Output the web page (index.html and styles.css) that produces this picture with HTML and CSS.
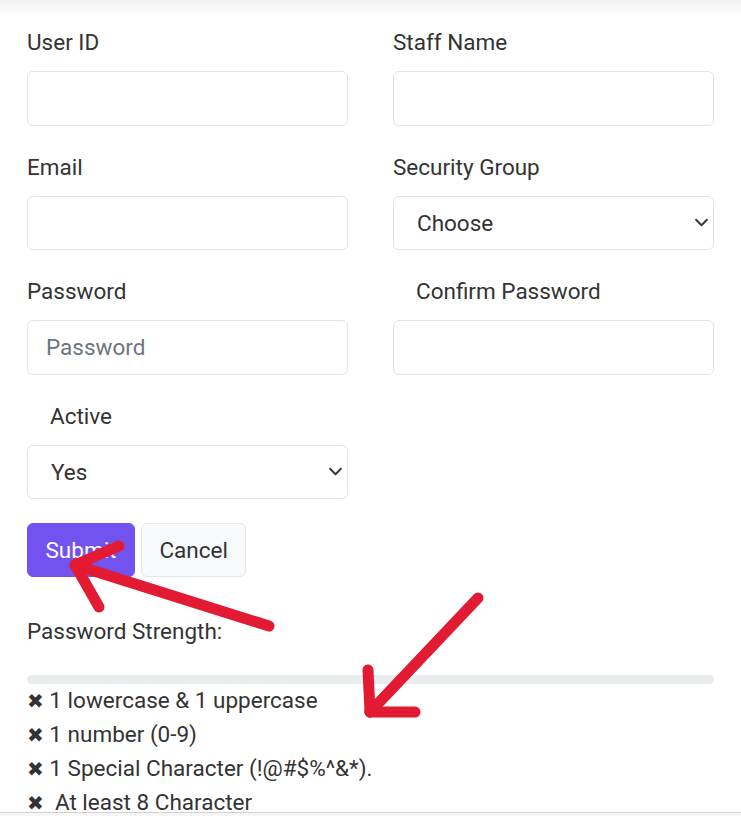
FILE: index.html
```html
<!DOCTYPE html>
<html lang="en">
<head>
<meta charset="utf-8">
<title>Add User</title>
<link rel="stylesheet" href="styles.css">
</head>
<body>
<div class="topshade"></div>
<form class="user-form">
  <div class="row">
    <div class="field">
      <label class="form-label">User ID</label>
      <input class="form-control" type="text">
    </div>
    <div class="field">
      <label class="form-label">Staff Name</label>
      <input class="form-control" type="text">
    </div>
  </div>
  <div class="row">
    <div class="field">
      <label class="form-label">Email</label>
      <input class="form-control" type="email">
    </div>
    <div class="field">
      <label class="form-label">Security Group</label>
      <select class="form-select"><option>Choose</option></select>
    </div>
  </div>
  <div class="row">
    <div class="field">
      <label class="form-label">Password</label>
      <input class="form-control" type="password" placeholder="Password">
    </div>
    <div class="field">
      <label class="form-label indent">Confirm Password</label>
      <input class="form-control" type="password">
    </div>
  </div>
  <div class="row">
    <div class="field">
      <label class="form-label indent">Active</label>
      <select class="form-select"><option>Yes</option><option>No</option></select>
    </div>
  </div>
  <div class="actions">
    <button type="button" class="btn btn-primary">Submit</button>
    <button type="button" class="btn btn-light">Cancel</button>
  </div>
  <div class="strength-label">Password Strength:</div>
  <div class="progress"></div>
  <ul class="rules">
    <li><span class="x">✖</span> 1 lowercase &amp; 1 uppercase</li>
    <li><span class="x">✖</span> 1 number (0-9)</li>
    <li><span class="x">✖</span> 1 Special Character (!@#$%^&amp;*).</li>
    <li><span class="x">✖</span>&nbsp; At least 8 Character</li>
  </ul>
</form>
<svg class="annotations" width="741" height="816" viewBox="0 0 741 816">
  <g fill="none" stroke="#e31b32" stroke-width="11" stroke-linecap="round" stroke-linejoin="round">
    <path d="M269 626 L75 565"/>
    <path d="M75 565 L119 546"/>
    <path d="M75 565 L99 607"/>
    <path d="M478 598 L370 712"/>
    <path d="M370 712 L368 670"/>
    <path d="M370 712 L415 712"/>
  </g>
</svg>
<div class="bottombar"></div>
</body>
</html>
```
FILE: styles.css
```css
html, body {
  margin: 0;
  padding: 0;
  background: #fff;
}
body {
  font-family: Roboto, "Liberation Sans", Arial, sans-serif;
  font-size: 22.5px;
  line-height: 34px;
  color: #333;
  overflow: hidden;
}
.topshade {
  height: 18px;
  background: linear-gradient(#f2f2f2, #ffffff);
}
.user-form {
  padding: 7px 27px 0 27px;
}
.row {
  display: grid;
  grid-template-columns: 1fr 1fr;
  column-gap: 45px;
}
.field {
  margin-bottom: 24px;
}
.form-label {
  display: block;
  height: 34px;
  margin-bottom: 12px;
}
.form-label.indent {
  padding-left: 23px;
}
.form-control,
.form-select {
  display: block;
  box-sizing: border-box;
  width: 100%;
  height: 54.5px;
  margin: 0;
  border: 1px solid #e2e3e5;
  border-radius: 6px;
  background-color: #fff;
  font-family: inherit;
  font-size: 22.5px;
  color: #333;
  outline: none;
}
.form-control {
  padding: 0 18px;
}
.form-control::placeholder {
  color: #6c757d;
}
.form-select {
  -webkit-appearance: none;
  appearance: none;
  padding: 0 40px 0 23px;
  background-image: url("data:image/svg+xml,%3csvg xmlns='http://www.w3.org/2000/svg' viewBox='0 0 16 10'%3e%3cpath fill='none' stroke='%23343a40' stroke-linecap='round' stroke-linejoin='round' stroke-width='2.2' d='M2 2l6 6 6-6'/%3e%3c/svg%3e");
  background-repeat: no-repeat;
  background-position: right 4px center;
  background-size: 15px 9px;
}
.actions {
  display: flex;
  gap: 6px;
}
.btn {
  box-sizing: border-box;
  height: 54px;
  padding: 0 17.5px;
  border-radius: 6px;
  font-family: inherit;
  font-size: 22.5px;
  line-height: 34px;
  cursor: pointer;
}
.btn-primary {
  background: #7353f0;
  border: 1px solid #7353f0;
  color: #fff;
}
.btn-light {
  background: #f8f9fa;
  border: 1px solid #e4e6e8;
  color: #333;
}
.strength-label {
  margin-top: 37px;
}
.progress {
  height: 9px;
  margin-top: 27px;
  border-radius: 5px;
  background: #e9ecef;
}
.rules {
  list-style: none;
  margin: -1px 0 0 0;
  padding: 0;
}
.rules li {
  height: 34px;
  white-space: nowrap;
}
.x {
  font-family: "DejaVu Sans", sans-serif;
  font-size: 20px;
  color: #333;
}
.annotations {
  position: absolute;
  left: 0;
  top: 0;
  pointer-events: none;
}
.bottombar {
  position: fixed;
  left: 0;
  right: 0;
  bottom: 0;
  height: 3px;
  border-top: 1px solid #d2d2d2;
  background: #f6f6f6;
}
```
